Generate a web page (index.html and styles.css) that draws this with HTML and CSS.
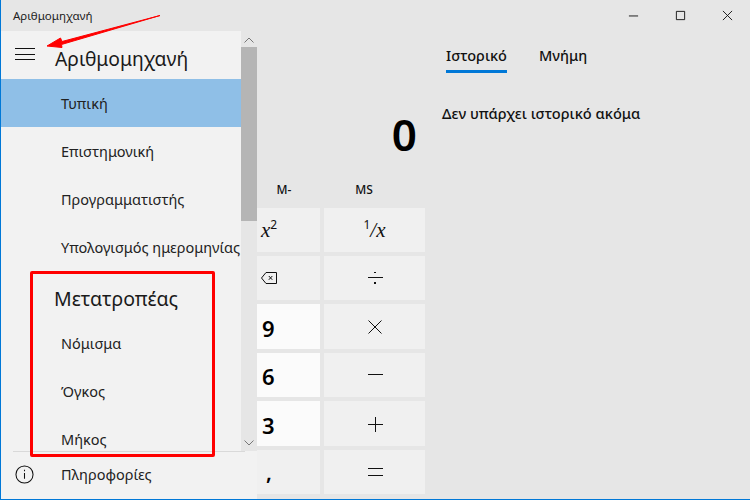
FILE: index.html
```html
<!DOCTYPE html>
<html lang="el">
<head>
<meta charset="utf-8">
<title>Αριθμομηχανή</title>
<link rel="stylesheet" href="styles.css">
</head>
<body>
<div class="window">
  <header class="titlebar">
    <span class="app-title">Αριθμομηχανή</span>
    <div class="win-controls">
      <svg class="win-icon" viewBox="0 0 12 12"><path d="M1 6.5h10"/></svg>
      <svg class="win-icon" viewBox="0 0 12 12"><path d="M1.5 1.5h9v9h-9z"/></svg>
      <svg class="win-icon" viewBox="0 0 12 12"><path d="M1 1l10 10M11 1L1 11"/></svg>
    </div>
  </header>
  <main class="content">
    <section class="calc">
      <div class="display">0</div>
      <div class="memory">
        <span class="mem-key">M-</span>
        <span class="mem-key">MS</span>
      </div>
      <div class="keypad">
        <div class="key"></div><div class="key"></div>
        <div class="key italic shift-left">x<sup>2</sup></div><div class="key italic"><sup>1</sup>/x</div>
        <div class="key"></div><div class="key"></div>
        <div class="key shift-left">
          <svg class="key-icon" viewBox="0 0 16 12"><path d="M5 .5h10.500v11H5L.5 6z"/><path d="M7.800 4l3.500 3.800M11.300 4L7.800 7.800"/></svg>
        </div>
        <div class="key">
          <svg class="key-icon crisp" viewBox="0 0 16 16"><path d="M.500 7.500h15"/><path class="dot" d="M8 1.500v1.500M8 12v1.500"/></svg>
        </div>
        <div class="key"></div><div class="key"></div>
        <div class="key digit">9</div>
        <div class="key"><svg class="key-icon" viewBox="0 0 16 16"><path d="M1.500 1.500l13 13M14.500 1.500l-13 13"/></svg></div>
        <div class="key"></div><div class="key"></div>
        <div class="key digit">6</div>
        <div class="key"><svg class="key-icon crisp" viewBox="0 0 16 16"><path d="M.500 7.500h15"/></svg></div>
        <div class="key"></div><div class="key"></div>
        <div class="key digit">3</div>
        <div class="key"><svg class="key-icon crisp" viewBox="0 0 16 16"><path d="M.500 8h15M8 .5v15"/></svg></div>
        <div class="key"></div><div class="key"></div>
        <div class="key comma">,</div>
        <div class="key"><svg class="key-icon crisp" viewBox="0 0 16 16"><path d="M.500 4.500h15M.500 11.500h15"/></svg></div>
      </div>
    </section>
    <section class="history">
      <div class="tabs">
        <span class="tab active">Ιστορικό</span>
        <span class="tab">Μνήμη</span>
      </div>
      <p class="empty">Δεν υπάρχει ιστορικό ακόμα</p>
    </section>
    <nav class="nav-pane">
      <div class="nav-body">
        <div class="nav-list">
          <div class="nav-head">
            <svg class="burger crisp" viewBox="0 0 20 12"><path d="M0 .5h20M0 6h20M0 11.500h20"/></svg>
            <span class="nav-title">Αριθμομηχανή</span>
          </div>
          <a class="nav-item selected">Τυπική</a>
          <a class="nav-item">Επιστημονική</a>
          <a class="nav-item">Προγραμματιστής</a>
          <a class="nav-item">Υπολογισμός ημερομηνίας</a>
          <div class="nav-section">Μετατροπέας</div>
          <a class="nav-item">Νόμισμα</a>
          <a class="nav-item">Όγκος</a>
          <a class="nav-item">Μήκος</a>
        </div>
        <div class="scrollbar">
          <svg class="chev" viewBox="0 0 10 6"><path d="M.5 5.500L5 1l4.500 4.500"/></svg>
          <div class="thumb"></div>
          <svg class="chev chev-down" viewBox="0 0 10 6"><path d="M.5.5L5 5 9.500.5"/></svg>
        </div>
      </div>
      <div class="nav-foot">
        <svg class="info" viewBox="0 0 20 20"><circle cx="10" cy="10" r="9"/><path d="M10 8.500v6M10 5v1.600"/></svg>
        <span class="foot-label">Πληροφορίες</span>
      </div>
    </nav>
  </main>
  <div class="red-box"></div>
  <svg class="red-arrow" viewBox="0 0 750 500"><path d="M160 15.500L62 41.500l-1.500-3.500L47 46l15 1.500-.5-3z"/></svg>
</div>
</body>
</html>
```

FILE: styles.css
```css
* { box-sizing: border-box; }
html, body { margin: 0; height: 100%; overflow: hidden; }
body { font-family: "Noto Sans", "Open Sans", sans-serif; color: #1a1a1a; }

.window {
  position: relative;
  width: 750px;
  height: 500px;
  background: #e6e6e6;
  border-left: 1px solid #0078d7;
  border-bottom: 1px solid #0078d7;
  display: flex;
  flex-direction: column;
}

.titlebar {
  height: 31px;
  flex: none;
  display: flex;
  align-items: center;
  justify-content: space-between;
  padding-left: 12px;
}
.app-title { font-size: 11.500px; color: #222; }
.win-controls { display: flex; gap: 36px; padding-right: 17px; height: 100%; align-items: center; }
.win-icon { width: 11px; height: 11px; fill: none; stroke: #111; stroke-width: 1; }

.content { position: relative; flex: 1; display: flex; min-height: 0; }

.calc { width: 424px; flex: none; display: flex; flex-direction: column; }
.display {
  height: 139px;
  padding: 73px 8px 0 0;
  text-align: right;
  font-size: 44px;
  line-height: 60px;
  font-weight: 600;
  color: #000;
}
.memory {
  margin-left: 245px;
  height: 38px;
  display: grid;
  grid-template-columns: 76px 76px;
  column-gap: 4px;
  align-items: center;
  justify-items: center;
}
.mem-key { font-size: 12px; font-weight: 500; color: #111; }

.keypad {
  margin-left: 11px;
  height: 286px;
  display: grid;
  grid-template-columns: repeat(3, 100px) 101px;
  grid-template-rows: 44px 44px 45px 44px 45px 44px;
  gap: 4px;
}
.key {
  background: #f0f0f0;
  display: flex;
  align-items: center;
  justify-content: center;
  min-height: 0;
  font-size: 16px;
  color: #111;
}
.key.digit { background: #fbfbfb; font-size: 22px; font-weight: 600; line-height: 48px; color: #000; justify-content: flex-start; padding: 2px 0 0 42px; }
.key.comma { font-size: 21px; font-weight: 600; color: #000; justify-content: flex-start; padding-left: 46px; }
.key.italic { font-family: "Liberation Serif", serif; font-style: italic; font-size: 21px; display: block; text-align: center; line-height: 44px; }
.key.italic sup { font-size: 12px; font-style: normal; line-height: 0; vertical-align: 8px; font-family: "Noto Sans", sans-serif; }
.shift-left { padding-right: 2px; }
.key-icon { width: 16px; height: 16px; fill: none; stroke: #111; stroke-width: 1; }
.key-icon .dot { stroke-width: 1.4; }
.crisp { shape-rendering: crispEdges; }

.history { flex: 1; padding: 0 0 0 17px; }
.tabs { display: flex; gap: 32px; padding-left: 4px; height: 42px; }
.tab { font-size: 14.500px; font-weight: 500; height: 42px; padding-top: 14px; line-height: 20px; color: #111; }
.tab.active { border-bottom: 3px solid #0078d7; }
.empty { margin: 29px 0 0; font-size: 14.600px; line-height: 22px; font-weight: 500; color: #111; }

.nav-pane {
  position: absolute;
  top: 0; left: 0; bottom: 0;
  width: 256px;
  display: flex;
  flex-direction: column;
  background: #f2f2f2;
}
.nav-body { height: 420px; flex: none; display: flex; overflow: hidden; position: relative; }
.nav-list { width: 240px; flex: none; }
.nav-head { height: 48px; display: flex; align-items: center; padding-left: 14px; gap: 20px; }
.burger { width: 20px; height: 12px; fill: none; stroke: #111; stroke-width: 1; margin-bottom: 3px; }
.nav-title { font-size: 19.300px; color: #1a1a1a; position: relative; top: 3px; }
.nav-item { display: flex; align-items: center; height: 48px; padding-left: 60px; font-size: 14.500px; color: #222; white-space: nowrap; }
.nav-item.selected { background: #8fbfe7; }
.nav-section { height: 48px; padding: 13px 0 0 53px; font-size: 19.500px; line-height: 30px; color: #1a1a1a; }

.scrollbar { width: 16px; flex: none; background: #e6e6e6; display: flex; flex-direction: column; align-items: center; position: relative; }
.chev { width: 10px; height: 6px; fill: none; stroke: #777; stroke-width: 1; margin-top: 6px; }
.thumb { position: absolute; top: 16px; left: 0; width: 16px; height: 174px; background: #b5b5b5; }
.chev-down { position: absolute; bottom: 5px; left: 3px; }

.nav-foot { flex: 1; display: flex; align-items: center; position: relative; padding: 0 0 2px 14px; gap: 27px; }
.nav-foot::before { content: ""; position: absolute; top: 0; left: 12px; width: 232px; height: 1px; background: #d9d9d9; }
.info { width: 19px; height: 19px; fill: none; stroke: #111; stroke-width: 1.1; }
.foot-label { font-size: 14.500px; color: #222; }

.red-box {
  position: absolute;
  left: 29px; top: 271px;
  width: 185px; height: 186px;
  border: 3px solid #f00;
  border-radius: 2px;
}
.red-arrow { position: absolute; left: -1px; top: 0; width: 750px; height: 500px; fill: #f00; stroke: #f00; stroke-width: 1; pointer-events: none; }
```
